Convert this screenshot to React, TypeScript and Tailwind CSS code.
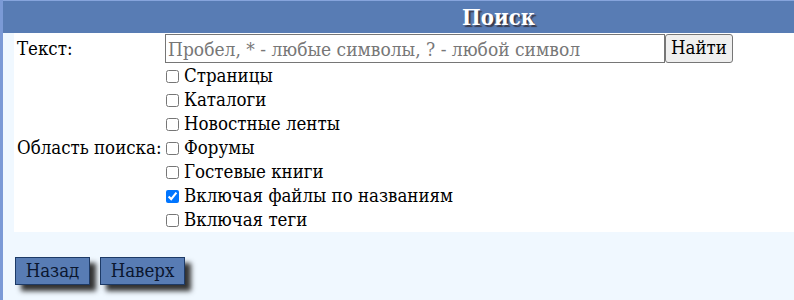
import React from "react";

const areas = [
  { label: "Страницы", checked: false },
  { label: "Каталоги", checked: false },
  { label: "Новостные ленты", checked: false },
  { label: "Форумы", checked: false },
  { label: "Гостевые книги", checked: false },
  { label: "Включая файлы по названиям", checked: true },
  { label: "Включая теги", checked: false },
];

// Times-like cyrillic: the only serif face with cyrillic glyphs here
const serif = "font-['DejaVu_Serif_Condensed','DejaVu_Serif',serif]";

export default function App() {
  return (
    <div
      className={`w-[794px] h-[300px] overflow-hidden bg-[#f0f8ff] border-l-[3px] border-[#7b9ad6] text-black text-[18.5px] ${serif}`}
    >
      {/* header */}
      <div className="h-[33px] bg-[#587cb4] border-t border-[#86a4dc] flex items-center">
        <div className="w-[532px] text-right text-white font-bold text-[22px] leading-none [text-shadow:2px_2px_1px_#3b3b4b]">
          Поиск
        </div>
      </div>

      {/* form */}
      <div className="ml-[11px] bg-white w-[800px]">
        <div className="flex h-[31px] items-center">
          <div className="w-[151px] pl-[3px]">Текст:</div>
          <input
            type="text"
            placeholder="Пробел, * - любые символы, ? - любой символ"
            className={`w-[500px] h-[29px] border border-[#767676] px-[2px] text-[19px] placeholder:text-[#777777] outline-none ${serif}`}
          />
          <button
            className={`h-[29px] w-[68px] bg-[#efefef] border border-[#767676] rounded-[3px] text-[18.5px] leading-none ${serif}`}
          >
            Найти
          </button>
        </div>
        <div className="flex items-center">
          <div className="w-[151px] pl-[3px] whitespace-nowrap">Область поиска:</div>
          <div className="flex flex-col">
            {areas.map((a) => (
              <label key={a.label} className="flex items-center h-[24px] whitespace-nowrap">
                <input
                  type="checkbox"
                  defaultChecked={a.checked}
                  className="w-[13px] h-[13px] ml-[1px] mr-[5px] accent-[#0075ff]"
                />
                {a.label}
              </label>
            ))}
          </div>
        </div>
      </div>

      {/* bottom buttons */}
      <div className="flex gap-[10px] pl-[12px] pt-[25px]">
        <button
          className={`h-[28px] w-[75px] bg-[#587cb4] border border-[#1d3a66] text-[#0b1730] text-[18.5px] leading-none shadow-[6px_6px_5px_#333333] ${serif}`}
        >
          Назад
        </button>
        <button
          className={`h-[28px] w-[85px] bg-[#587cb4] border border-[#1d3a66] text-[#0b1730] text-[18.5px] leading-none shadow-[6px_6px_5px_#333333] ${serif}`}
        >
          Наверх
        </button>
      </div>
    </div>
  );
}
